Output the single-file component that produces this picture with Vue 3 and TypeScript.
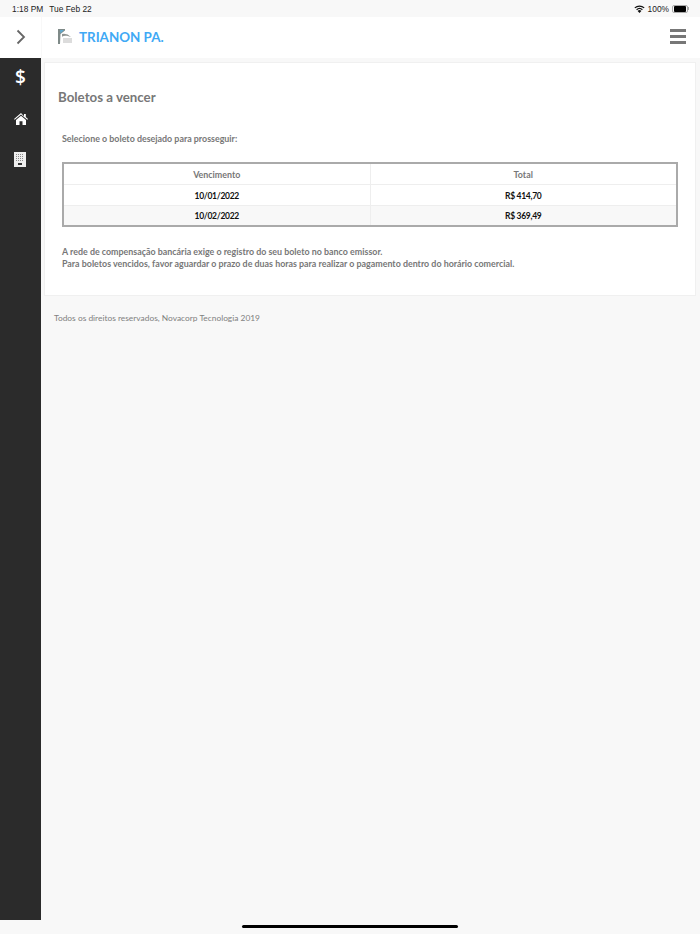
<script setup lang="ts">
interface Boleto {
  vencimento: string;
  total: string;
}

const boletos: Boleto[] = [
  { vencimento: '10/01/2022', total: 'R$ 414,70' },
  { vencimento: '10/02/2022', total: 'R$ 369,49' }
];
</script>

<template>
  <div class="screen">
    <div class="status_bar">
      <div class="status_left">
        <span>1:18 PM</span>
        <span>Tue Feb 22</span>
      </div>
      <div class="status_right">
        <svg width="11" height="8" viewBox="0 0 11 8">
          <path d="M5.500 8 3.600 5.900a2.800 2.800 0 0 1 3.800 0Z" fill="#111" />
          <path d="M2.600 4.800a4.300 4.300 0 0 1 5.800 0" fill="none" stroke="#111" stroke-width="1.200" />
          <path d="M.8 2.900a7 7 0 0 1 9.400 0" fill="none" stroke="#111" stroke-width="1.200" />
        </svg>
        <span>100%</span>
        <div class="battery"><div class="battery_fill"></div></div>
        <div class="battery_tip"></div>
      </div>
    </div>

    <div class="main">
      <aside class="sidebar">
        <div class="toggle">
          <svg width="10" height="16" viewBox="0 0 10 16">
            <path d="M1.500 1.500 8 8l-6.500 6.500" fill="none" stroke="#666" stroke-width="1.800" />
          </svg>
        </div>
        <nav class="side_nav">
          <div class="side_item dollar">$</div>
          <div class="side_item">
            <svg width="14" height="12" viewBox="0 0 14 12">
              <path d="M7 0 0 6l.7.8L7 1.500l6.300 5.300.7-.8-2.200-1.900V1h-1.800v2.300Z" fill="#fff" />
              <path d="M7 2.700 2 6.900V12h3.500V8.300h3V12H12V6.900Z" fill="#fff" />
            </svg>
          </div>
          <div class="side_item">
            <svg class="building" width="12" height="15" viewBox="0 0 12 15">
              <rect width="12" height="15" fill="#eee" />
              <path d="M2.500 2v8M4.500 2v8M6.500 2v8M8.500 2v8" stroke="#8a8a8a" stroke-width="1" stroke-dasharray="1 1" />
              <rect x="4" y="11" width="4" height="2" fill="#333" />
            </svg>
          </div>
        </nav>
      </aside>

      <div class="page">
        <header class="topbar">
          <div class="brand">
            <svg width="16" height="16" viewBox="0 0 16 16">
              <path d="M1 0h7v1.500L3.500 5 3 15H1Z" fill="#7f8a88" />
              <path d="M3 1h4L3.500 4.500Z" fill="#5fa9cf" />
              <path d="M5 5q5-1 9 3l-4-1.200q-3-.6-5 1Z" fill="#8f9593" />
              <rect x="6" y="9" width="9" height="5" fill="#dcdcdc" />
            </svg>
            <span class="brand_name">TRIANON PA.</span>
          </div>
          <div class="menu_icon">
            <span></span><span></span><span></span>
          </div>
        </header>

        <div class="content">
          <section class="card">
            <h1 class="card_title">Boletos a vencer</h1>
            <p class="prompt">Selecione o boleto desejado para prosseguir:</p>
            <table class="boletos">
              <thead>
                <tr>
                  <th>Vencimento</th>
                  <th>Total</th>
                </tr>
              </thead>
              <tbody>
                <tr v-for="boleto in boletos" :key="boleto.vencimento">
                  <td>{{ boleto.vencimento }}</td>
                  <td>{{ boleto.total }}</td>
                </tr>
              </tbody>
            </table>
            <p class="notice">
              A rede de compensação bancária exige o registro do seu boleto no banco emissor.<br />
              Para boletos vencidos, favor aguardar o prazo de duas horas para realizar o pagamento dentro do horário comercial.
            </p>
          </section>
          <footer class="copyright">Todos os direitos reservados, Novacorp Tecnologia 2019</footer>
        </div>
      </div>
    </div>

    <div class="home_indicator"></div>
  </div>
</template>

<style>
html,
body {
  margin: 0;
  background: #f8f8f8;
}
</style>

<style scoped>
.screen {
  position: relative;
  width: 700px;
  height: 934px;
  overflow: hidden;
  background: #f8f8f8;
  font-family: Lato, 'Noto Sans', sans-serif;
  color: #777;
}

.status_bar {
  height: 17px;
  padding: 0 11px 0 12px;
  display: flex;
  align-items: center;
  justify-content: space-between;
  font-family: 'Liberation Sans', sans-serif;
  font-size: 8.400px;
  color: #222;
}

.status_left {
  display: flex;
  gap: 6px;
}

.status_right {
  display: flex;
  align-items: center;
  gap: 3px;
}

.battery {
  width: 16px;
  height: 8px;
  padding: 0 1px;
  border: 1px solid #aaa;
  border-radius: 2px;
  box-sizing: border-box;
}

.battery_fill {
  height: 100%;
  background: #000;
  border-radius: 1px;
}

.battery_tip {
  width: 1px;
  height: 3px;
  margin-left: -3px;
  background: #aaa;
}

.main {
  display: flex;
  align-items: flex-start;
}

.sidebar {
  width: 41px;
  flex-shrink: 0;
}

.toggle {
  height: 41px;
  padding-bottom: 2px;
  box-sizing: border-box;
  background: #fff;
  display: flex;
  align-items: center;
  justify-content: center;
}

.side_nav {
  height: 862px;
  box-sizing: border-box;
  background: #2b2b2b;
  display: flex;
  flex-direction: column;
}

.side_item {
  height: 41px;
  display: flex;
  align-items: center;
  justify-content: center;
}

.side_item:first-child {
  height: 40px;
}

.building {
  margin-right: 1px;
}

.dollar {
  padding-bottom: 2px;
  box-sizing: border-box;
  font-family: 'Open Sans', sans-serif;
  font-size: 19px;
  font-weight: 600;
  color: #fff;
}

.page {
  flex: 1;
  min-width: 0;
}

.topbar {
  height: 41px;
  margin-left: 1px;
  padding: 0 14px 2px 15px;
  box-sizing: border-box;
  background: #fff;
  display: flex;
  align-items: center;
  justify-content: space-between;
}

.brand {
  display: flex;
  align-items: center;
  gap: 6px;
}

.brand_name {
  font-size: 13.400px;
  font-weight: 700;
  color: #3fa9f5;
}

.menu_icon {
  width: 16px;
  display: flex;
  flex-direction: column;
  gap: 3px;
}

.menu_icon span {
  height: 3px;
  background: #777;
}

.content {
  padding: 4px 4px 0 3px;
}

.card {
  height: 234px;
  padding: 26px 18px 0 13px;
  box-sizing: border-box;
  background: #fff;
  border: 1px solid #f0f0f0;
}

.card_title {
  margin: 0;
  font-size: 13.300px;
  line-height: 16px;
  font-weight: 700;
  color: #777;
}

.prompt {
  margin: 28px 0 0 4px;
  font-size: 8.900px;
  line-height: 12px;
  font-weight: 700;
}

.boletos {
  width: 616px;
  margin: 17px 0 0 4px;
  border: 2px solid #aaa;
  border-collapse: collapse;
  table-layout: fixed;
  font-size: 8.900px;
}

.boletos th,
.boletos td {
  height: 20px;
  padding: 0;
  text-align: center;
  border: 1px solid #eee;
}

.boletos th {
  height: 20px;
  font-weight: 700;
  color: #777;
}

.boletos td {
  height: 17.500px;
  padding-top: 2px;
  font-size: 8.500px;
  letter-spacing: -0.3px;
  font-weight: 700;
  color: #111;
}

.boletos tbody tr:nth-child(2) {
  background: #f8f8f8;
}

.notice {
  margin: 19px 0 0 4px;
  font-size: 8.900px;
  line-height: 12px;
  font-weight: 700;
}

.copyright {
  margin: 16px 0 0 10px;
  font-size: 8.400px;
  line-height: 12px;
  color: #808080;
}

.home_indicator {
  position: absolute;
  left: 242px;
  bottom: 6px;
  width: 216px;
  height: 3px;
  border-radius: 2px;
  background: #000;
}
</style>
